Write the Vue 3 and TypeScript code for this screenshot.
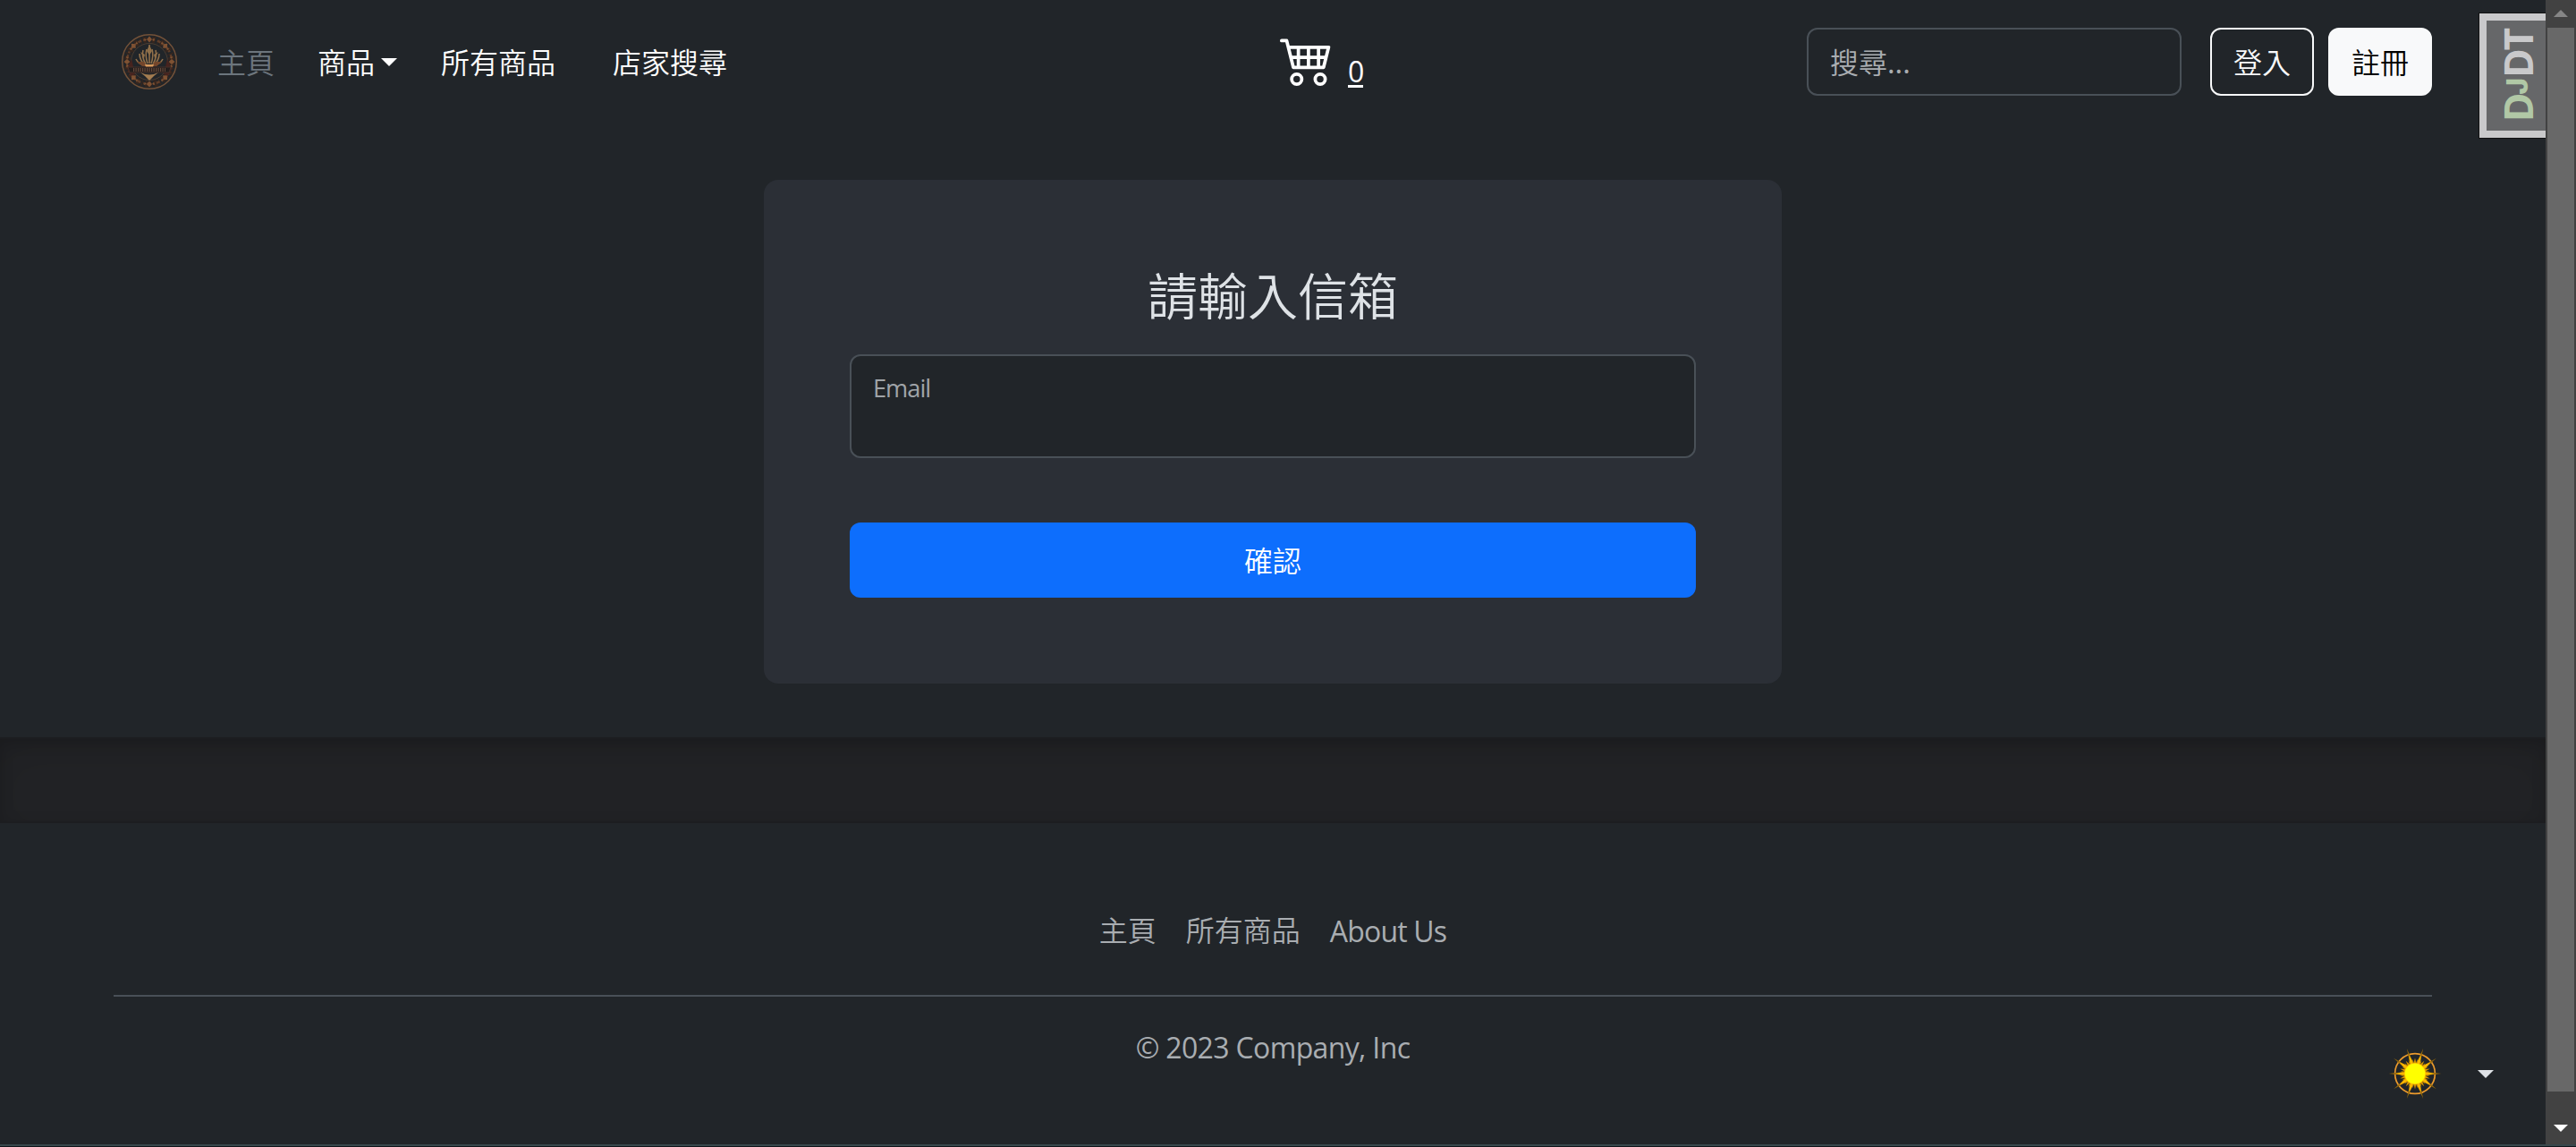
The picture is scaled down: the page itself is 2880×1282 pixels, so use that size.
<script setup lang="ts">
import { ref } from 'vue'

interface NavLink {
  label: string
  kind?: 'muted' | 'dropdown'
}

const navLinks: NavLink[] = [
  { label: '主頁', kind: 'muted' },
  { label: '商品', kind: 'dropdown' },
  { label: '所有商品' },
  { label: '店家搜尋' },
]
const cartCount = ref(0)
const keyword = ref('')
const email = ref('')

// Angles of the sun rays, in degrees
const longRays = [0, 36, 72, 108, 144, 180, 216, 252, 288, 324]
const shortRays = [18, 54, 90, 126, 162, 198, 234, 270, 306, 342]
const tinyRays = Array.from({ length: 20 }, (_, i) => 9 + i * 18)
const beads = Array.from({ length: 8 }, (_, i) => i * 45)
</script>

<template>
  <div class="screen">
    <div class="view">
      <div class="page">
        <header class="header">
          <svg class="logo" viewBox="-32 -32 64 64">
            <g fill="none">
              <circle r="30.3" stroke="#735138" stroke-width="1.5" />
              <circle r="25" stroke="#35261f" stroke-width="7" stroke-dasharray="4 2.5 1.5 2" />
              <circle r="25" stroke="#5f3d29" stroke-width="2.5" stroke-dasharray="2 3 4 2" />
              <circle r="20.5" stroke="#4d3d31" stroke-width="1" />
            </g>
            <g v-for="b in beads" :key="b" :transform="`rotate(${b})`">
              <path d="M0-28.5L3-25L0-21.5L-3-25ZM-6-26L-3-25L-5-23ZM6-26L3-25L5-23Z" fill="#7f5233" />
            </g>
            <path d="M-20-3L-25 8L-21 16L-16 14ZM20-3L25 8L21 16L16 14Z" fill="#46231e" />
            <g fill="none" stroke="#91704a" stroke-width="1.6">
              <path d="M0-19V2M-3-14Q-5-7-2 2M3-14Q5-7 2 2M-7-13Q-9-6-4 3M7-13Q9-6 4 3M-11-9Q-11-2-5 4M11-9Q11-2 5 4M-15-3Q-12 3-6 4M15-3Q12 3 6 4" />
            </g>
            <path d="M0-19L3-12L0-7L-3-12ZM-10-11L-5-8L-6-4ZM10-11L5-8L6-4Z" fill="#8f6f49" />
            <path d="M-14 0L-6 0L-4 3H4L6 0H14L8 5H-8Z" fill="#74462b" />
            <path d="M-5 3H5L4 6H-4Z" fill="#d79a5d" />
            <path d="M-24 6H24L22 12H-22Z" fill="#241e1d" stroke="#45302a" stroke-width="1" />
            <path d="M-18 9H18" stroke="#65483a" stroke-width="4" stroke-dasharray="1.2 1.3" />
            <path d="M-10 12Q0 17 10 12L5 16L0 21L-5 16Z" fill="#a37c50" />
          </svg>

          <nav class="nav">
            <a v-for="link in navLinks" :key="link.label" :class="['nav-link', link.kind]">
              {{ link.label }}<svg v-if="link.kind === 'dropdown'" class="caret nav-caret" viewBox="0 0 18 9"><path d="M0 0H18L9 9Z" /></svg>
            </a>
          </nav>

          <a class="cart">
            <svg class="cart-icon" viewBox="0 0 16 16">
              <path d="M0 2.5A.5.5 0 0 1 .5 2H2a.5.5 0 0 1 .485.379L2.89 4H14.5a.5.5 0 0 1 .485.621l-1.5 6A.5.5 0 0 1 13 11H4a.5.5 0 0 1-.485-.379L1.61 3H.5a.5.5 0 0 1-.5-.5zM3.14 5l.5 2H5V5H3.14zM6 5v2h2V5H6zm3 0v2h2V5H9zm3 0v2h1.36l.5-2H12zm1.11 3H12v2h.61l.5-2zM11 8H9v2h2V8zM8 8H6v2h2V8zM5 8H3.89l.5 2H5V8zm0 5a1 1 0 1 0 0 2 1 1 0 0 0 0-2zm-2 1a2 2 0 1 1 4 0 2 2 0 0 1-4 0zm9-1a1 1 0 1 0 0 2 1 1 0 0 0 0-2zm-2 1a2 2 0 1 1 4 0 2 2 0 0 1-4 0z" />
            </svg>
            <span class="cart-count">{{ cartCount }}</span>
          </a>

          <div class="actions">
            <input v-model="keyword" class="search" type="search" placeholder="搜尋..." />
            <button class="btn outline">登入</button>
            <button class="btn light">註冊</button>
          </div>
        </header>

        <main class="main">
          <form class="card" @submit.prevent>
            <h2 class="title">請輸入信箱</h2>
            <label class="field">
              <span class="field-label">Email</span>
              <input v-model="email" class="field-input" type="text" />
            </label>
            <button class="submit">確認</button>
          </form>
        </main>

        <div class="divider"></div>

        <footer class="footer">
          <div class="footer-links">
            <a>主頁</a>
            <a>所有商品</a>
            <a class="latin about">About Us</a>
          </div>
          <p class="latin copyright">© 2023 Company, Inc</p>
        </footer>

        <div class="debug-handle">
          <span class="debug-text"><span class="dj">D<span class="small-j">J</span></span>DT</span>
        </div>

        <div class="theme">
          <svg class="sun" viewBox="-30 -30 60 60">
            <circle r="22.4" fill="none" stroke="#eb9a2d" stroke-width="1.7" />
            <path v-for="a in longRays" :key="'l' + a" d="M10-2.2L29.5 0L10 2.2Z" fill="#94690c" :transform="`rotate(${a})`" />
            <path v-for="a in longRays" :key="'m' + a" d="M10-2.6L22 0L10 2.6Z" fill="#ffb800" :transform="`rotate(${a})`" />
            <path v-for="a in shortRays" :key="'s' + a" d="M10-1.8L17.5 0L10 1.8Z" fill="#d99600" :transform="`rotate(${a})`" />
            <path v-for="a in tinyRays" :key="'t' + a" d="M10-1.2L16.5 0L10 1.2Z" fill="#c98b00" :transform="`rotate(${a})`" />
            <circle r="12" fill="#ffcc00" />
            <circle r="11.2" fill="#ffff00" />
          </svg>
          <svg class="caret theme-caret" viewBox="0 0 18 9"><path d="M0 0H18L9 9Z" /></svg>
        </div>
      </div>

      <div class="scrollbar">
        <svg class="arrow up" viewBox="0 0 16 8"><path d="M0 8L8 0L16 8Z" /></svg>
        <div class="thumb"></div>
        <svg class="arrow down" viewBox="0 0 16 8"><path d="M0 0H16L8 8Z" /></svg>
      </div>
    </div>
    <div class="window-edge"></div>
  </div>
</template>

<style>
body {
  background: #212529;
  overflow: hidden;
}
</style>

<style scoped>
* {
  box-sizing: border-box;
}

.screen {
  width: 2880px;
  height: 1282px;
  display: flex;
  flex-direction: column;
  overflow: hidden;
  background: #212529;
  color: #dee2e6;
  font-family: 'Noto Sans CJK TC', sans-serif;
  font-size: 32px;
  font-weight: 350;
  line-height: 48px;
}

.view {
  display: flex;
  height: 1279px;
}

.window-edge {
  height: 3px;
  background: linear-gradient(#38484c 0 2px, #11161c 2px);
}

.page {
  position: relative;
  width: 2846px;
  display: flex;
  flex-direction: column;
}

.header {
  height: 138px;
  padding: 0 127px 0 135px;
  display: flex;
  align-items: center;
}

.logo {
  width: 64px;
  height: 64px;
  flex: none;
}

.nav {
  display: flex;
  width: 1187px;
  padding: 0 0 3px 44px;
}

.nav-link {
  display: flex;
  align-items: center;
  color: #fff;
  white-space: nowrap;
  margin-right: 64px;
}

.nav-link.muted {
  color: #6c757d;
  margin-right: 48px;
}

.nav-link.dropdown {
  margin-right: 49px;
}

.caret {
  width: 18px;
  height: 9px;
  margin-left: 7px;
  fill: #fff;
}

.nav-caret {
  margin-top: 3px;
}

.cart {
  display: flex;
  align-items: flex-end;
  margin: -7px 0 0 45px;
}

.cart-icon {
  width: 60px;
  height: 60px;
  fill: #fff;
}

.cart-count {
  margin: 0 0 -2px 16px;
  width: 17px;
  height: 33px;
  line-height: 29px;
  border-bottom: 3px solid #fff;
  color: #fff;
  font-family: 'Open Sans', sans-serif;
  font-weight: 400;
  letter-spacing: -1px;
}

.actions {
  display: flex;
  margin-left: auto;
}

.search {
  width: 419px;
  height: 76px;
  margin-right: 32px;
  padding: 0 26px 3px 24px;
  border: 2px solid #495057;
  border-radius: 12px;
  background: #212529;
  color: #dee2e6;
  font: inherit;
}

.search::placeholder {
  color: #a9adb1;
  opacity: 1;
}

.btn {
  width: 116px;
  height: 76px;
  padding: 0 0 3px;
  border: 2px solid #f8f9fa;
  border-radius: 12px;
  background: transparent;
  color: #f8f9fa;
  font: inherit;
}

.btn.light {
  margin-left: 16px;
  background: #f8f9fa;
  color: #000;
}

.main {
  height: 686px;
  padding-top: 63px;
  display: flex;
  justify-content: center;
  align-items: flex-start;
}

.card {
  width: 1138px;
  height: 563px;
  padding: 93px 96px 0;
  border-radius: 16px;
  background: #2b2f36;
  display: flex;
  flex-direction: column;
}

.title {
  margin: 0 0 35px;
  font-size: 56px;
  font-weight: 350;
  line-height: 67px;
  text-align: center;
}

.field {
  display: flex;
  flex-direction: column;
  height: 116px;
  padding: 16px 24px;
  border: 2px solid #495057;
  border-radius: 12px;
  background: #212529;
}

.field-label {
  font-family: 'Open Sans', sans-serif;
  font-size: 27.2px;
  font-weight: 400;
  line-height: 39px;
  letter-spacing: -1px;
  color: #a0a4a8;
}

.field-input {
  height: 36px;
  padding: 0;
  border: 0;
  outline: 0;
  background: transparent;
  color: #dee2e6;
  font: inherit;
}

.submit {
  height: 84px;
  margin-top: 72px;
  padding: 0 0 3px;
  border: 0;
  border-radius: 12px;
  background: #0d6efd;
  color: #fff;
  font: inherit;
}

.divider {
  height: 96px;
  flex: none;
  border: solid rgba(0, 0, 0, 0.15);
  border-width: 2px 0;
  background: #222326;
  box-shadow: inset 0 16px 48px rgba(0, 0, 0, 0.1), inset 0 4px 16px rgba(0, 0, 0, 0.15);
}

.footer {
  padding: 94px 127px 0;
}

.footer-links {
  height: 100px;
  display: flex;
  justify-content: center;
  border-bottom: 2px solid #495057;
  color: #a9adb1;
  gap: 33px;
}

.latin {
  font-family: 'Open Sans', sans-serif;
  font-weight: 400;
}

.about {
  padding-top: 3px;
  letter-spacing: -0.8px;
}

.copyright {
  margin: 33px 0 0;
  text-align: center;
  color: #a9adb1;
  letter-spacing: -0.65px;
}

.debug-handle {
  position: absolute;
  top: 14px;
  right: 0;
  width: 75px;
  height: 141px;
  border: 1px solid #111;
  border-right: 0;
  background: #666769;
  box-shadow: inset 8px 8px #c9c9cb, inset 0 -8px #c9c9cb;
  display: flex;
  align-items: center;
  justify-content: center;
  padding-left: 12px;
}

.debug-text {
  writing-mode: vertical-rl;
  transform: rotate(180deg);
  font-family: 'Open Sans', sans-serif;
  font-weight: 700;
  font-size: 44.5px;
  line-height: 60px;
  letter-spacing: -2.4px;
  color: #c9c9cb;
}

.dj {
  color: #b1c8a6;
}

.small-j {
  font-family: Inter, sans-serif;
  font-size: 32px;
  font-weight: 800;
  letter-spacing: 0;
}

.theme {
  position: absolute;
  left: 2670px;
  top: 1170px;
  display: flex;
  align-items: center;
}

.sun {
  width: 60px;
  height: 60px;
}

.theme-caret {
  margin-left: 40px;
  fill: #dee2e6;
}

.scrollbar {
  width: 34px;
  height: 1279px;
  background: #424242;
  display: flex;
  flex-direction: column;
  align-items: center;
}

.arrow {
  width: 16px;
  height: 8px;
}

.up {
  margin: 11px 0 12px;
  fill: #868686;
}

.thumb {
  width: 30px;
  height: 1189px;
  background: #686868;
}

.down {
  margin-top: 37px;
  fill: #fff;
}
</style>
